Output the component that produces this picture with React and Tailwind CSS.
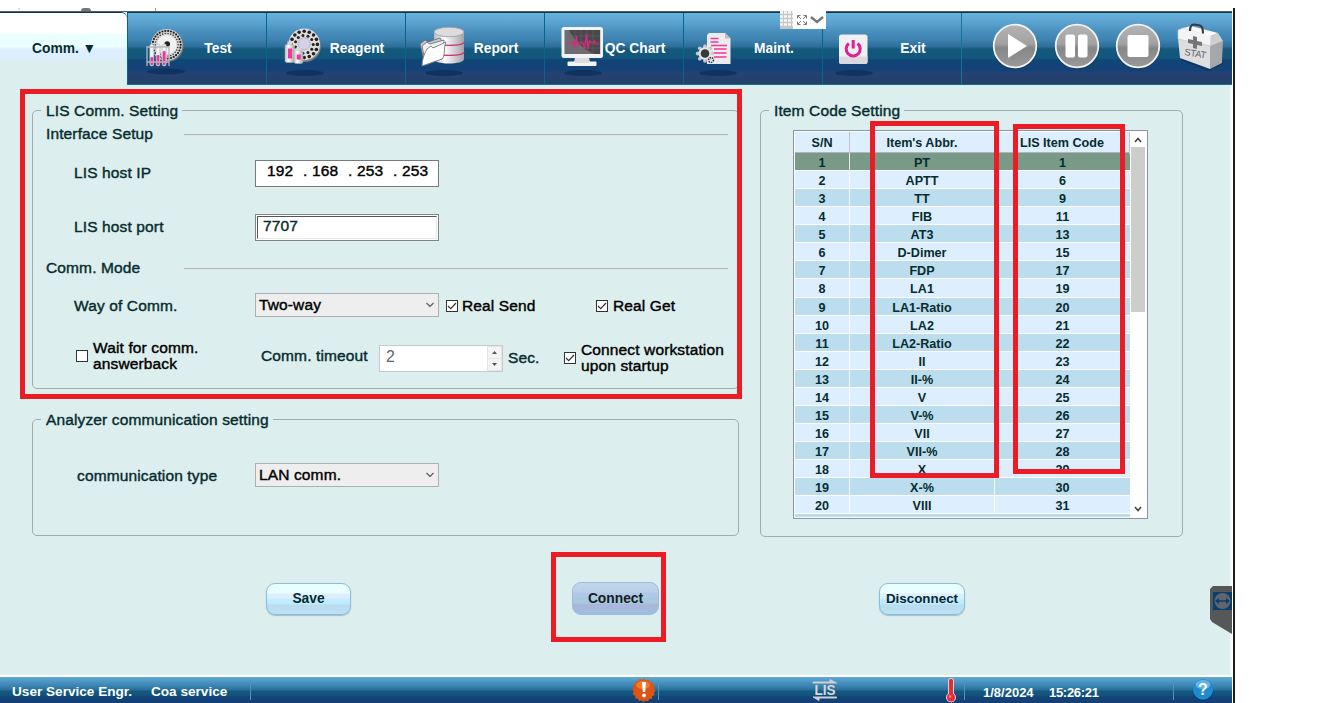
import React from "react";

const items = [
  ["PT", 1], ["APTT", 6], ["TT", 9], ["FIB", 11], ["AT3", 13], ["D-Dimer", 15], ["FDP", 17],
  ["LA1", 19], ["LA1-Ratio", 20], ["LA2", 21], ["LA2-Ratio", 22], ["II", 23], ["II-%", 24],
  ["V", 25], ["V-%", 26], ["VII", 27], ["VII-%", 28], ["X", 29], ["X-%", 30], ["VIII", 31],
];

const ring = (n, r, cx, cy) =>
  Array.from({ length: n }, (_, i) => {
    const a = (i / n) * Math.PI * 2;
    return [cx + r * Math.cos(a), cy + r * Math.sin(a)];
  });

const Shadow = ({ cx = 38, cy = 60 }) => (
  <ellipse cx={cx} cy={cy} rx="19" ry="3" fill="#0b2f59" opacity="0.75" />
);

function NavSvg({ children }) {
  return (
    <svg width="60" height="71" viewBox="0 0 60 71" className="shrink-0">
      <defs>
        <linearGradient id="metal" x1="0" x2="1" y1="0" y2="0">
          <stop offset="0" stopColor="#b9b9bd" />
          <stop offset="0.35" stopColor="#ffffff" />
          <stop offset="1" stopColor="#a3a3a8" />
        </linearGradient>
      </defs>
      {children}
    </svg>
  );
}

const TestIcon = () => (
  <NavSvg>
    <Shadow cy={58.5} />
    <circle cx="40" cy="33" r="15.5" fill="#777b80" />
    <circle cx="38.7" cy="31.8" r="15.7" fill="#d5d5d5" />
    {ring(30, 14, 38.7, 31.8).map(([x, y], i) => <circle key={i} cx={x} cy={y} r="1.1" fill="#222" />)}
    {ring(26, 11.4, 38.7, 31.8).map(([x, y], i) => <circle key={i} cx={x} cy={y} r="0.8" fill="#444" />)}
    <circle cx="38.7" cy="31.8" r="9.8" fill="#f1f1f1" />
    <circle cx="39.2" cy="31" r="2.8" fill="#222" />
    <path d="M38 31l-3 4" stroke="#777" strokeWidth="1.5" />
    {[23.8, 30, 36.2].map((x, i) => (
      <g key={x}>
        <rect x={x - 2} y="31" width="4" height="22" rx="2" fill="#f4f4f6" stroke="#aaaab2" strokeWidth="0.6" />
        <rect x={x - 1.4} y={[44, 42, 38][i]} width="2.8" height={[8, 10, 14][i]} rx="1.2" fill="#f0379b" />
      </g>
    ))}
    <path d="M18.5 34h23M18.5 49h23M19 33v20M41 33v20" stroke="#b5b6bf" strokeWidth="1.3" fill="none" />
  </NavSvg>
);

const Bottle = ({ x, y, w, h }) => (
  <g>
    <rect x={x + w * 0.25} y={y} width={w * 0.5} height="4" fill="#d8d8de" />
    <rect x={x} y={y + 3} width={w} height={h - 3} rx="1.8" fill="url(#metal)" stroke="#bbb" strokeWidth="0.4" />
    <rect x={x + w * 0.3} y={y + 7} width={w * 0.45} height={h - 11} fill="#f0379b" />
  </g>
);

const ReagentIcon = () => (
  <NavSvg>
    <Shadow />
    <circle cx="38" cy="33" r="16" fill="#7d7d82" />
    <circle cx="37.2" cy="31.4" r="15.8" fill="#dedede" />
    {ring(16, 13.2, 37.2, 31.4).map(([x, y], i) => <circle key={i} cx={x} cy={y} r="1.8" fill="#252024" />)}
    {ring(11, 9, 37.2, 31.4).map(([x, y], i) => <circle key={i} cx={x} cy={y} r="1.5" fill="#252024" />)}
    <circle cx="37.2" cy="30.8" r="6" fill="#d4d2ea" stroke="#aaa8b8" strokeWidth="0.8" />
    <Bottle x={18} y={28.5} w={9.5} h={21} />
    <Bottle x={27} y={34.5} w={9} h={16} />
  </NavSvg>
);

const ReportIcon = () => (
  <NavSvg>
    <Shadow />
    <path d="M28 20v26c0 6 30 6 30 0V20z" fill="url(#metal)" />
    <ellipse cx="43" cy="19" rx="15" ry="4.8" fill="#dcdce0" stroke="#99999e" strokeWidth="0.8" />
    <path d="M28 29c0 4.500 30 4.500 30 0" stroke="#d63384" fill="none" strokeWidth="1.2" />
    <path d="M28 39c0 4.500 30 4.500 30 0" stroke="#d63384" fill="none" strokeWidth="1.2" />
    <path d="M14 31l5-4 3 2 12-4 2 3-6 18-11 6z" fill="#c9c9cc" stroke="#66666b" strokeWidth="0.8" />
    <path d="M16 33l5-4 3 2 14-4-3 18-15 7z" fill="#f1f1f1" stroke="#66666b" strokeWidth="0.8" />
    <path d="M16 53c0-6 2-12 5-17l4-3 2 2 13-6c-3 6 0 13-4 17z" fill="#ffffff" stroke="#77777c" strokeWidth="0.9" />
  </NavSvg>
);

const QcIcon = () => (
  <NavSvg>
    <Shadow />
    <path d="M30 44h14l1 5h-16z" fill="#c6c6ca" />
    <rect x="22.500" y="48.500" width="29" height="4.500" rx="1" fill="#f4f4f4" />
    <path d="M30 44h14v6h-14z" fill="#dcdce0" />
    <rect x="16.500" y="14" width="41.500" height="31" rx="2.500" fill="#f3f3f5" />
    <rect x="19.700" y="17" width="35.500" height="24" fill="#4a484c" />
    <path d="M19.700 17h4q10 18 25.300 24h-29.300z" fill="#77757a" opacity="0.8" />
    <path d="M24 17v24M30 17v24M36 17v24M42 17v24M48 17v24M20 23h35M20 29h35M20 35h35" stroke="#77767c" strokeWidth="0.5" opacity=".7" />
    <path d="M21 30h6l1.500-2 1 8 2-13 1.500 10 1-3h4l1.500 6 2-15 1.500 15 1.500-8 2 2h2l1-2 1 3h4" stroke="#e0267d" strokeWidth="1.200" fill="none" />
  </NavSvg>
);

const MaintIcon = () => (
  <NavSvg>
    <Shadow cx={34} />
    <path d="M25 20h16l5.500 5.500v25.500H23V22z" fill="#ececee" />
    <path d="M41 20l5.500 5.500h-5.500z" fill="#bdbdc4" />
    <path d="M26.500 25.500h8M26.500 29h8M27 32.500h16M30 36h12.500M30 40h12.500M30 44h12.500" stroke="#f0379b" strokeWidth="1.4" />
    {ring(8, 7.3, 21, 40.5).map(([x, y], i) => <circle key={i} cx={x} cy={y} r="1.900" fill="#c8c8cc" />)}
    <circle cx="21" cy="40.500" r="6.500" fill="#e4e4e6" />
    <circle cx="21" cy="40.500" r="4.300" fill="#37373c" />
    <circle cx="27" cy="47" r="2.500" fill="none" stroke="#333" strokeWidth="1.500" strokeDasharray="1.500 1" />
  </NavSvg>
);

const ExitIcon = () => (
  <NavSvg>
    <Shadow cx={31} />
    <rect x="16" y="21.500" width="28.500" height="29.500" rx="2.500" fill="#f0f0f4" />
    <path d="M16 43.500h28.500v5a2.500 2.500 0 0 1-2.500 2.500h-23.500a2.500 2.500 0 0 1-2.500-2.500z" fill="#d9d9df" />
    <path d="M25.800 30.500a7 7 0 1 0 8.800 0" stroke="#e01f92" strokeWidth="3" fill="none" />
    <path d="M30.200 27v8.500" stroke="#e01f92" strokeWidth="3" />
  </NavSvg>
);

const nav = [
  ["Test", TestIcon], ["Reagent", ReagentIcon], ["Report", ReportIcon],
  ["QC Chart", QcIcon], ["Maint.", MaintIcon], ["Exit", ExitIcon],
];

function RoundControl({ children }) {
  return (
    <svg width="48" height="50" viewBox="0 0 48 50">
      <defs>
        <linearGradient id="ctl" x1="0" x2="0" y1="0" y2="1">
          <stop offset="0" stopColor="#b4b4b4" />
          <stop offset="0.45" stopColor="#a2a2a2" />
          <stop offset="0.55" stopColor="#868686" />
          <stop offset="1" stopColor="#9a9a9a" />
        </linearGradient>
      </defs>
      <circle cx="24" cy="25.500" r="22.500" fill="#173b60" opacity="0.5" />
      <circle cx="24" cy="24" r="21.300" fill="url(#ctl)" stroke="#f4f4f4" strokeWidth="1.800" />
      {children}
    </svg>
  );
}

const StatIcon = () => (
  <svg width="50" height="50" viewBox="0 0 50 50">
    <path d="M4 38l28 11 15-7V24z" fill="#0c3058" opacity="0.7" />
    <path d="M2 16l32 7v24L4 36z" fill="#dededf" />
    <path d="M34 23l13-4-1 22-12 6z" fill="#a6a7ab" />
    <path d="M2 17V8l5-2 28 7v11z" fill="#f4f4f5" stroke="#c5c5c8" strokeWidth="0.700" />
    <path d="M7 6l8-2 27 7-7 3z" fill="#fbfbfb" />
    <path d="M35 14l7-3 5 8-13 5z" fill="#cfcfd2" />
    <path d="M14 9q0-6.500 4-6.500l6 1q3 1 3 8" fill="none" stroke="#3a3c42" strokeWidth="2.200" />
    <path d="M17 14l4 1v4l5 1v4l-5-1v4l-4-1v-4l-5-1v-4l5 1z" fill="#73757a" />
    <text x="8" y="33" fontFamily="Liberation Sans, sans-serif" fontSize="9.500" fill="#606269" transform="rotate(9 8 33)" textLength="22">STAT</text>
  </svg>
);

function Header() {
  return (
    <header className="flex h-[74px] shrink-0 border-t border-[#52606c] bg-[#dceeed]">
      <div className="flex w-[127px] items-center rounded-tr-md border-t border-[#0f3557] bg-[linear-gradient(#fff_0,#fff_20px,#eaffff_21px,#eaffff_34px,#ddeeff_36px,#ddeeff_47px,#dceeed_48px)] pl-[32px] text-[13.800px] font-bold text-[#062c2e]">
        <span className="pt-px">Comm. ▼</span>
      </div>
      <div className="flex h-[73px] flex-1 border-t border-b border-t-[#0f3557] border-b-[#176e96] bg-[linear-gradient(#67b3dc_0,#5ba2cf_10px,#4a90bf_18px,#3c82b1_27px,#2c6c98_34px,#14587c_36px,#12577c_45px,#124577_47px,#144276_57px,#254275_60px,#24406d_66px,#1f4468_71px)]">
        {nav.map(([label, Icon]) => (
          <button key={label} className="flex w-[139px] shrink-0 items-center border-l border-[#07648e]">
            <Icon />
            <span className="flex w-[60px] justify-center whitespace-nowrap pt-[2px] text-[13.800px] font-bold text-white">{label}</span>
          </button>
        ))}
        <div className="flex flex-1 border-l border-[#1b7099] pl-[29px] pt-[9px]">
          <div className="flex gap-[13.500px]">
            <RoundControl><path d="M17 12v24l19-12z" fill="#fff" /></RoundControl>
            <RoundControl>
              <rect x="12.500" y="12.500" width="9.500" height="23" rx="2" fill="#fff" />
              <rect x="25" y="12.500" width="9.500" height="23" rx="2" fill="#fff" />
            </RoundControl>
            <RoundControl><rect x="13.500" y="13" width="21" height="22" rx="2" fill="#fff" /></RoundControl>
            <StatIcon />
          </div>
        </div>
      </div>
    </header>
  );
}

const label = "text-[15.500px] tracking-[0.130px] leading-[18px] whitespace-nowrap [-webkit-text-stroke:0.4px_currentColor]";

function Group({ title, className, children }) {
  return (
    <fieldset className={`rounded-[5px] border border-[#a3acac] ${className}`}>
      <legend className={`ml-[8px] pl-[5px] pr-[4px] pt-[2px] ${label}`}>{title}</legend>
      {children}
    </fieldset>
  );
}

function Section({ title, className }) {
  return (
    <div className={`flex items-center pl-[13px] ${className}`}>
      <span className={`w-[138px] pb-[2px] ${label}`}>{title}</span>
      <span className="h-[2px] w-[544px] border-b border-white/60 bg-[#b3b9b9]" />
    </div>
  );
}

function Combo({ value }) {
  return (
    <div className="flex h-[24px] w-[184px] items-center justify-between border border-[#acb0b0] bg-[#eeeeee] pl-[3px] pr-[4px] text-black">
      <span className={label}>{value}</span>
      <svg width="8" height="6" viewBox="0 0 8 6"><path d="M.5 1L4 4.500 7.500 1" stroke="#555" strokeWidth="1.100" fill="none" /></svg>
    </div>
  );
}

function Check({ on }) {
  return (
    <span className="flex h-[12px] w-[12px] shrink-0 items-center justify-center border border-[#333] bg-white">
      {on && <svg width="10" height="10" viewBox="0 0 10 10"><path d="M1 5l2.700 2.700L9 2" stroke="#333" strokeWidth="1.200" fill="none" /></svg>}
    </span>
  );
}

function LisGroup() {
  return (
    <Group title="LIS Comm. Setting" className="h-[289px] w-[707px]">
      <Section title="Interface Setup" className="h-[30px]" />
      <div className="mt-[10px] flex h-[27px] items-center pl-[41px]">
        <span className={`w-[181px] pb-px ${label}`}>LIS host IP</span>
        <div className={`flex h-[27px] w-[184px] items-start border border-[#777b80] bg-white pl-[11px] pt-px text-black ${label}`}>
          <span className="w-[36px]">192</span><span className="w-[9px]">.</span>
          <span className="w-[36px]">168</span><span className="w-[9px]">.</span>
          <span className="w-[36px]">253</span><span className="w-[9px]">.</span>
          <span>253</span>
        </div>
      </div>
      <div className="mt-[27px] flex h-[27px] items-center pl-[41px]">
        <span className={`w-[181px] pb-px ${label}`}>LIS host port</span>
        <div className="h-[27px] w-[184px] border border-[#82868a] bg-white p-px">
          <div className={`h-[23px] border border-[#e8e8e8] border-l-[#555] border-t-[#555] pl-[5px] ${label}`}>7707</div>
        </div>
      </div>
      <Section title="Comm. Mode" className="mt-[18px] h-[20px]" />
      <div className="mt-[14px] flex h-[24px] items-center pl-[41px]">
        <span className={`w-[181px] pt-px ${label}`}>Way of Comm.</span>
        <Combo value="Two-way" />
        <div className={`ml-[7px] flex w-[150px] items-center gap-[4px] pt-[2px] text-black ${label}`}><Check on />Real Send</div>
        <div className={`flex items-center gap-[5px] pt-[2px] text-black ${label}`}><Check on />Real Get</div>
      </div>
      <div className="mt-[28px] flex h-[27px] items-center pl-[43px]">
        <div className="-mt-[6px] flex w-[185px] items-center gap-[5px] text-black">
          <Check />
          <span className={`${label} !leading-[16px]`}>Wait for comm.<br />answerback</span>
        </div>
        <span className={`-mt-[5px] w-[118px] ${label}`}>Comm. timeout</span>
        <div className="flex h-[27px] w-[124px] justify-between border border-[#c6c9cc] bg-white pl-[6px] text-[15.8px] leading-[21px] text-[#5e6568]">
          <span>2</span>
          <span className="flex w-[15px] flex-col gap-px bg-[#e5e5e5] p-px">
            <span className="flex flex-1 items-center justify-center bg-[#f4f4f4]"><svg width="5" height="3"><path d="M0 3l2.500-3L5 3z" fill="#555" /></svg></span>
            <span className="flex flex-1 items-center justify-center bg-[#f4f4f4]"><svg width="5" height="3"><path d="M0 0l2.500 3L5 0z" fill="#555" /></svg></span>
          </span>
        </div>
        <span className={`ml-[5px] w-[56px] pb-px ${label}`}>Sec.</span>
        <div className="-mt-px flex items-center gap-[5px] text-black">
          <Check on />
          <span className={`${label} !leading-[16px]`}>Connect workstation<br />upon startup</span>
        </div>
      </div>
    </Group>
  );
}

function ItemTable() {
  return (
    <div className="ml-[32px] mt-[10px] flex h-[389px] w-[355px] overflow-hidden border border-[#8c93a8] bg-white pl-px pt-px text-[12.600px] font-bold">
      <div className="w-[335px] shrink-0 overflow-hidden">
        <div className="grid h-[21px] grid-cols-[55px_145px_135px] border-b border-[#b0b5bd] bg-[#ddeeff] text-center leading-[22px]">
          <span className="border-r border-[#c0c3c8]">S/N</span>
          <span className="border-r border-[#c0c3c8]">Item's Abbr.</span>
          <span className="border-r border-[#c0c3c8]">LIS Item Code</span>
        </div>
        {items.map(([abbr, code], i) => (
          <div key={abbr} className={`grid h-[18.070px] grid-cols-[55px_145px_135px] grid-rows-[17.070px] border-b border-white text-center leading-[20px] ${i === 0 ? "bg-[#789a87]" : i % 2 ? "bg-[#ddeeff]" : "bg-[#bbddee]"}`}>
            <span className="border-r border-white/80">{i + 1}</span>
            <span className="border-r border-white/80">{abbr}</span>
            <span>{code}</span>
          </div>
        ))}
        <div className="h-[3px] bg-[#bbddee]" />
      </div>
      <div className="flex flex-1 flex-col items-center pt-px pr-px">
        <div className="flex h-[14px] items-center"><svg width="8" height="6" viewBox="0 0 8 6"><path d="M1 5l3-3.500L7 5" stroke="#444" strokeWidth="1.600" fill="none" /></svg></div>
        <div className="h-[165px] w-[14px] bg-[#cdcdcd]" />
        <div className="mt-auto flex h-[18px] items-center"><svg width="8" height="6" viewBox="0 0 8 6"><path d="M1 1l3 3.500L7 1" stroke="#444" strokeWidth="1.600" fill="none" /></svg></div>
      </div>
    </div>
  );
}

const buttonBase = "flex items-center justify-center rounded-[9px] pt-px text-[13.800px] font-bold";
const lightButton = "h-[32px] border-[1.5px] border-[#86bddb] bg-[linear-gradient(#eaffff_0,#e8ffff_9px,#ddeeff_10px,#ddeeff_14px,#c3eeff_15px,#bfe9ff_20px,#b9dcee_21px,#bbe2f2_30px)] shadow-[0_1px_1px_#a9bccb]";

function Footer() {
  const sep = "h-[20px] w-px shrink-0 bg-[#5292b8]";
  return (
    <footer className="flex h-[28px] shrink-0 items-center border-t-2 border-white bg-[linear-gradient(#5eaad5_0,#3e87b6_8px,#286e99_13px,#14597e_14px,#12557c_18px,#124478_20px,#153f75_26px)] bg-origin-padding text-[13.600px] font-bold text-white">
      <span className="w-[139px] whitespace-nowrap pl-[12px] pt-[5px]">User Service Engr.</span>
      <span className="ml-[12px] w-[99px] whitespace-nowrap pt-[5px]">Coa service</span>
      <i className={sep} />
      <svg width="24" height="24" viewBox="0 0 24 24" className="ml-[381px]">
        <path d="M12 .8l2 1.700 2.500-1 1.200 2.300 2.600.2.200 2.600 2.300 1.300-.9 2.500 1.600 2-1.600 2.100.6 2.500-2.300 1.200-.3 2.600-2.600.2-1.300 2.300-2.500-.8-1.800 1.400-2-1.600-2.500.8-1.200-2.300-2.600-.3-.2-2.600L.8 16l.9-2.500L.3 11.500l1.500-2-.7-2.500 2.300-1.300.3-2.600 2.600-.2L7.600.9l2.500.9z" fill="#df5412" />
        <ellipse cx="11" cy="7" rx="7" ry="4" fill="#f27b2e" />
        <path d="M10 4h4l-.8 10h-2.400z" fill="#fff" /><circle cx="12" cy="17.500" r="1.900" fill="#fff" />
      </svg>
      <i className={`ml-[2px] ${sep}`} />
      <svg width="26" height="24" viewBox="0 0 26 24" className="ml-[153px]">
        <path d="M1 4h17V1.500L24.500 5H1z" fill="#cfd0d2" stroke="#cfd0d2" />
        <path d="M24.500 20H7v2.500L1 19h23.500z" fill="#cfd0d2" stroke="#cfd0d2" />
        <text x="2.500" y="17" fontFamily="Liberation Sans, sans-serif" fontWeight="bold" fontSize="14.500" textLength="21" lengthAdjust="spacingAndGlyphs" fill="#d8d8da">LIS</text>
      </svg>
      <svg width="14" height="26" viewBox="0 0 14 26" className="ml-[106px]">
        <rect x="4" y="1" width="6" height="19" rx="3" fill="#ded0d6" /><circle cx="7" cy="20.500" r="5" fill="#ded0d6" />
        <rect x="5" y="2" width="4" height="18" rx="1.500" fill="#e12e35" /><circle cx="7" cy="20.500" r="4" fill="#ed2d34" />
        <circle cx="6" cy="19.500" r="1.200" fill="#ff8787" />
      </svg>
      <i className={`ml-[6px] ${sep}`} />
      <span className="ml-[18px] w-[66px] pt-[5px] text-[13px]">1/8/2024</span>
      <span className="w-[124px] pt-[5px] text-[13px] tracking-[-0.300px]">15:26:21</span>
      <i className={sep} />
      <svg width="22" height="24" viewBox="0 0 22 24" className="ml-[18px]">
        <ellipse cx="11" cy="13.500" rx="10.500" ry="9.500" fill="#0b3663" opacity="0.6" />
        <circle cx="11" cy="11.500" r="10.200" fill="#1e8bd0" /><ellipse cx="11" cy="6.500" rx="7.500" ry="4.500" fill="#72bdea" opacity="0.800" />
        <text x="11" y="17" textAnchor="middle" fontFamily="Liberation Sans, sans-serif" fontWeight="bold" fontSize="16" fill="#fff">?</text>
      </svg>
    </footer>
  );
}

export default function App() {
  return (
    <div className="relative flex h-[703px] w-[1319px] overflow-hidden bg-white font-['Liberation_Sans',Arial,sans-serif] text-[#062c2e]">
      <div className="flex w-[1232px] shrink-0 flex-col">
        <div className="flex h-[11px] shrink-0 items-end pl-[18px]">
          <span className="mb-px h-[2px] w-[2px] bg-[#ddd]" />
          <span className="ml-[61px] h-[3px] w-[10px] rounded-t-full bg-[#777]" />
          <span className="ml-[64px] h-[3px] w-px bg-[#999]" />
        </div>
        <Header />
        <main className="flex flex-1 flex-col border-r-2 border-[#f1f8f8] bg-[#dceeed]">
          <div className="flex gap-[21px] pl-[32px] pt-[15px]">
            <div className="flex flex-col gap-[20px]">
              <LisGroup />
              <Group title="Analyzer communication setting" className="h-[127px] w-[707px]">
                <div className="mt-[34px] flex items-center pl-[44px]">
                  <span className={`w-[178px] pt-px ${label}`}>communication type</span>
                  <Combo value="LAN comm." />
                </div>
              </Group>
            </div>
            <Group title="Item Code Setting" className="h-[437px] w-[423px]"><ItemTable /></Group>
          </div>
          <div className="mt-[45px] flex items-center pl-[266px]">
            <button className={`${buttonBase} ${lightButton} w-[85px]`}>Save</button>
            <button className={`${buttonBase} ml-[221px] h-[33px] w-[87px] border border-[#a3b9dc] bg-[linear-gradient(#bfd7ea_0,#b9d1e9_9px,#b3c7e8_10px,#b3c7e8_14px,#a7cadf_15px,#a7c9dd_20px,#a8b5dc_22px,#a9b8dd_26px,#9dbde1_28px)] text-[#151d20]`}>Connect</button>
            <button className={`${buttonBase} ${lightButton} ml-[220px] w-[86px] !text-[13.400px]`}>Disconnect</button>
          </div>
        </main>
        <Footer />
      </div>
      <div className="ml-px mt-[8px] w-[2px] bg-[#1c1c1c]" />

      <div className="absolute left-[780px] top-[11px] flex h-[18px] w-[46px] items-center justify-between bg-white pr-[2px]">
        <svg width="13" height="18" viewBox="0 0 13 18"><rect width="13" height="18" fill="#c5c5c5" /><path d="M0 1.500h13M0 5.500h13M0 9.500h13M0 13.500h13" stroke="#f7f7f7" strokeWidth="2.600" strokeDasharray="3 1" /></svg>
        <svg width="10" height="10" viewBox="0 0 10 10" stroke="#777" fill="none"><path d="M.5 3.500v-3h3M6.500.5h3v3M.5 6.500v3h3M9.500 6.500v3h-3M1 1l3 3M9 1L6 4M1 9l3-3M9 9L6 6" /></svg>
        <svg width="14" height="8" viewBox="0 0 14 8"><path d="M1 1l6 5 6-5" stroke="#777" strokeWidth="2.400" fill="none" /></svg>
      </div>
      <svg width="22" height="48" viewBox="0 0 22 48" className="absolute left-[1210px] top-[586px]">
        <path d="M3 0h19v48L2 36l-2-3V3z" fill="#555759" />
        <rect x="3" y="6" width="19" height="18" fill="#073f70" />
        <circle cx="12.500" cy="15" r="8" fill="#61656a" />
        <path d="M5 15l4-3v2.300h7v-2.300l4 3-4 3v-2.300H9v2.300z" fill="#073f70" />
      </svg>
      <div className="absolute left-[20px] top-[89px] h-[310px] w-[722px] border-[5px] border-[#ed1c24]" />
      <div className="absolute left-[870px] top-[121px] h-[357px] w-[129px] border-[5px] border-[#ed1c24]" />
      <div className="absolute left-[1013px] top-[124px] h-[350px] w-[112px] border-[5px] border-[#ed1c24]" />
      <div className="absolute left-[551px] top-[552px] h-[90px] w-[115px] border-[5px] border-[#ed1c24]" />
    </div>
  );
}
